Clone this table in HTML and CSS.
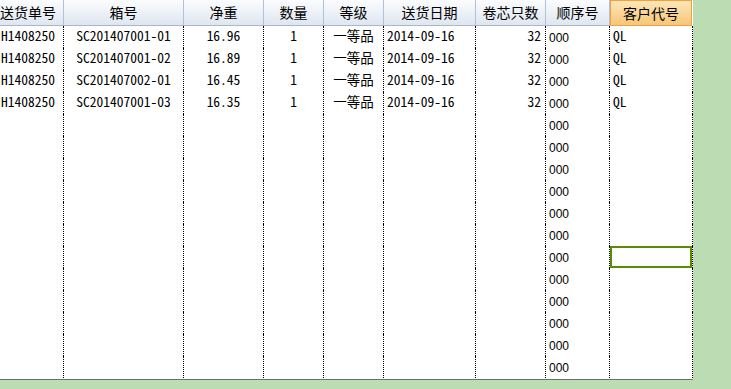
FILE: index.html
```html
<!DOCTYPE html>
<html lang="zh-CN">
<head>
    <meta charset="UTF-8">
    <title>送货明细</title>
    <link rel="stylesheet" href="styles.css">
</head>
<body>
    <div id="sheet">
        <div id="grid">
            <div class="row head">
                <div class="hc">送货单号</div>
                <div class="hc">箱号</div>
                <div class="hc">净重</div>
                <div class="hc">数量</div>
                <div class="hc">等级</div>
                <div class="hc">送货日期</div>
                <div class="hc">卷芯只数</div>
                <div class="hc">顺序号</div>
                <div class="hc active">客户代号</div>
            </div>
            <div id="rows"></div>
        </div>
    </div>

    <script>
        const rowsElement = document.getElementById('rows');
        const data = [
            ['H1408250', 'SC201407001-01', '16.96', '1', '一等品', '2014-09-16', '32', '000', 'QL'],
            ['H1408250', 'SC201407001-02', '16.89', '1', '一等品', '2014-09-16', '32', '000', 'QL'],
            ['H1408250', 'SC201407002-01', '16.45', '1', '一等品', '2014-09-16', '32', '000', 'QL'],
            ['H1408250', 'SC201407001-03', '16.35', '1', '一等品', '2014-09-16', '32', '000', 'QL']
        ];
        const classes = ['c-no', 'c-box', 'c-wt', 'c-qty', 'c-grade', 'c-date', 'c-core', 'c-seq', 'c-cust'];
        const totalRows = 16;
        const selectedRow = 10;

        for (let r = 0; r < totalRows; r++) {
            const values = data[r] || ['', '', '', '', '', '', '', '000', ''];
            const row = document.createElement('div');
            row.className = 'row';
            values.forEach((value, i) => {
                const cell = document.createElement('div');
                cell.className = 'cell ' + classes[i];
                if (r === selectedRow && i === 8) {
                    cell.classList.add('selected');
                }
                cell.textContent = value;
                row.appendChild(cell);
            });
            rowsElement.appendChild(row);
        }
    </script>
</body>
</html>
```

FILE: styles.css
```css
body {
    margin: 0;
    background-color: #bcdcb4;
    font-family: "Noto Sans Mono CJK SC", "Liberation Mono", monospace;
}
#sheet {
    width: 693px;
    height: 379px;
    overflow: hidden;
    background-color: #fff;
    border-bottom: 1px solid #6b6f6b;
}
#grid {
    margin-left: -7px;
}
.row {
    display: grid;
    grid-template-columns: 71px 120px 80px 60px 60px 92px 70px 64px 83px;
}
.head .hc {
    box-sizing: border-box;
    height: 26px;
    line-height: 24px;
    text-align: center;
    font-family: "Noto Sans CJK SC", sans-serif;
    font-size: 14px;
    color: #000;
    background: linear-gradient(#fbfcfe, #dfe6f0);
    border-right: 1px solid #b2c2d6;
    border-bottom: 1px solid #a9b7c9;
}
.head .hc.active {
    background: linear-gradient(#fce6b8, #f6c678);
    border: 1px solid #f3a03c;
    margin-right: 1px;
}
.cell {
    box-sizing: border-box;
    height: 22px;
    line-height: 18px;
    font-size: 13.5px;
    color: #000;
    white-space: nowrap;
    overflow: hidden;
    border-right: 1px dotted #000;
}
.c-no {
    padding-left: 8px;
}
.c-box,
.c-wt,
.c-qty,
.c-grade {
    text-align: center;
}
.c-date,
.c-seq,
.c-cust {
    padding-left: 3px;
}
.c-core {
    text-align: right;
    padding-right: 4px;
}
.c-seq {
    font-family: "Liberation Sans", sans-serif;
    font-size: 12px;
    line-height: 24px;
}
.cell.selected {
    box-shadow: inset 0 0 0 2px #5b8c00;
}
```
